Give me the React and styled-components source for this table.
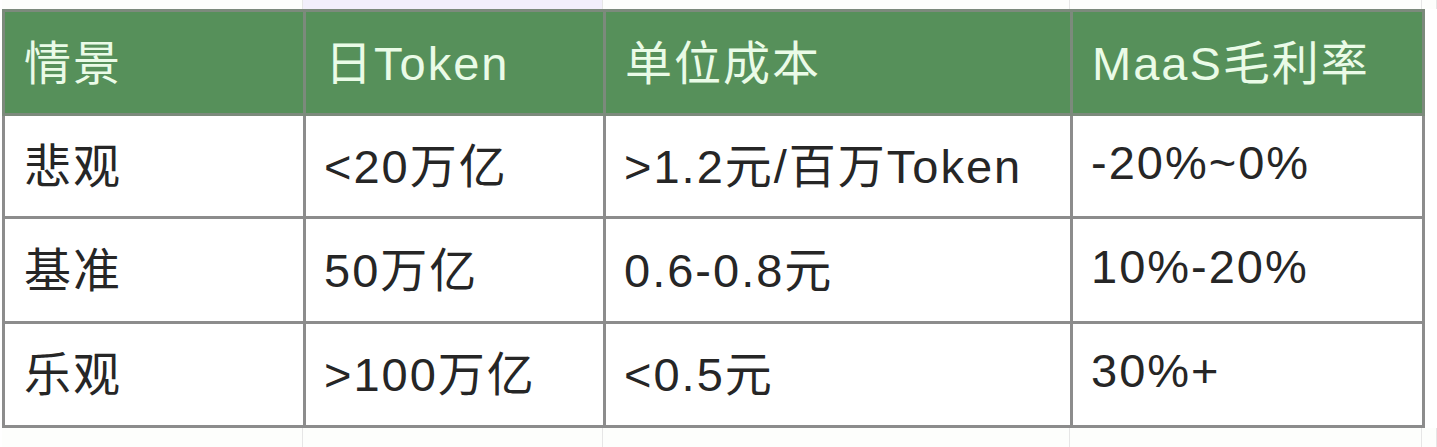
import React from 'react';
import styled, { createGlobalStyle } from 'styled-components';

const columns = [301, 300, 467, 352];

const head = ['情景', '日Token', '单位成本', 'MaaS毛利率'];

const rows = [
  { h: 103, cells: ['悲观', '<20万亿', '>1.2元/百万Token', '-20%~0%'] },
  { h: 105, cells: ['基准', '50万亿', '0.6-0.8元', '10%-20%'] },
  { h: 104, cells: ['乐观', '>100万亿', '<0.5元', '30%+'] },
];

const GlobalStyle = createGlobalStyle`
  html, body {
    margin: 0;
    padding: 0;
    background: #ffffff;
  }
  body {
    font-family: "Liberation Sans", "Noto Sans CJK SC", sans-serif;
    overflow: hidden;
  }
`;

const Sheet = styled.div`
  display: flex;
  flex-direction: column;
  width: 1437px;
  height: 447px;
  padding-left: 2px;
  box-sizing: border-box;
`;

const Strip = styled.div`
  display: grid;
  grid-template-columns: ${columns.map((c) => c + 'px').join(' ')} 1fr;
  height: ${(p) => p.$h}px;
`;

const GhostCell = styled.div`
  border-right: 1px solid #e6e6e6;
  background: ${(p) => (p.$tint ? '#f2effb' : '#fdfefc')};
`;

const Table = styled.table`
  border-collapse: collapse;
  table-layout: fixed;
  width: ${columns.reduce((a, b) => a + b, 0)}px;
`;

const HeadCell = styled.th`
  height: 104px;
  padding: 0 0 7px 19px;
  box-sizing: border-box;
  background: #56905a;
  color: #eafbe7;
  border: 3px solid #7c8a7c;
  text-align: left;
  font-weight: normal;
  font-size: 47px;
  letter-spacing: 2px;
  white-space: nowrap;
`;

const Cell = styled.td`
  height: ${(p) => p.$h}px;
  padding: 0 0 8px ${(p) => (p.$first ? 19 : 18)}px;
  box-sizing: border-box;
  color: #262626;
  border: 3px solid #8c8c8c;
  font-size: 47px;
  letter-spacing: 2px;
  white-space: nowrap;
  background: #ffffff;
`;

const App = () => {
  return (
    <>
      <GlobalStyle />
      <Sheet>
        <Strip $h={10}>
          {columns.map((c, i) => (
            <GhostCell key={c + '-' + i} $tint={i === 1} />
          ))}
          <GhostCell />
        </Strip>
        <Table>
          <colgroup>
            {columns.map((c, i) => (
              <col key={i} style={{ width: c }} />
            ))}
          </colgroup>
          <thead>
            <tr>
              {head.map((t) => (
                <HeadCell key={t}>{t}</HeadCell>
              ))}
            </tr>
          </thead>
          <tbody>
            {rows.map((r) => (
              <tr key={r.cells[0]}>
                {r.cells.map((t, i) => (
                  <Cell key={i} $h={r.h} $first={i === 0}>
                    {t}
                  </Cell>
                ))}
              </tr>
            ))}
          </tbody>
        </Table>
        <Strip $h={20}>
          {columns.map((c, i) => (
            <GhostCell key={c + '-' + i} />
          ))}
          <GhostCell />
        </Strip>
      </Sheet>
    </>
  );
};

export default App;
